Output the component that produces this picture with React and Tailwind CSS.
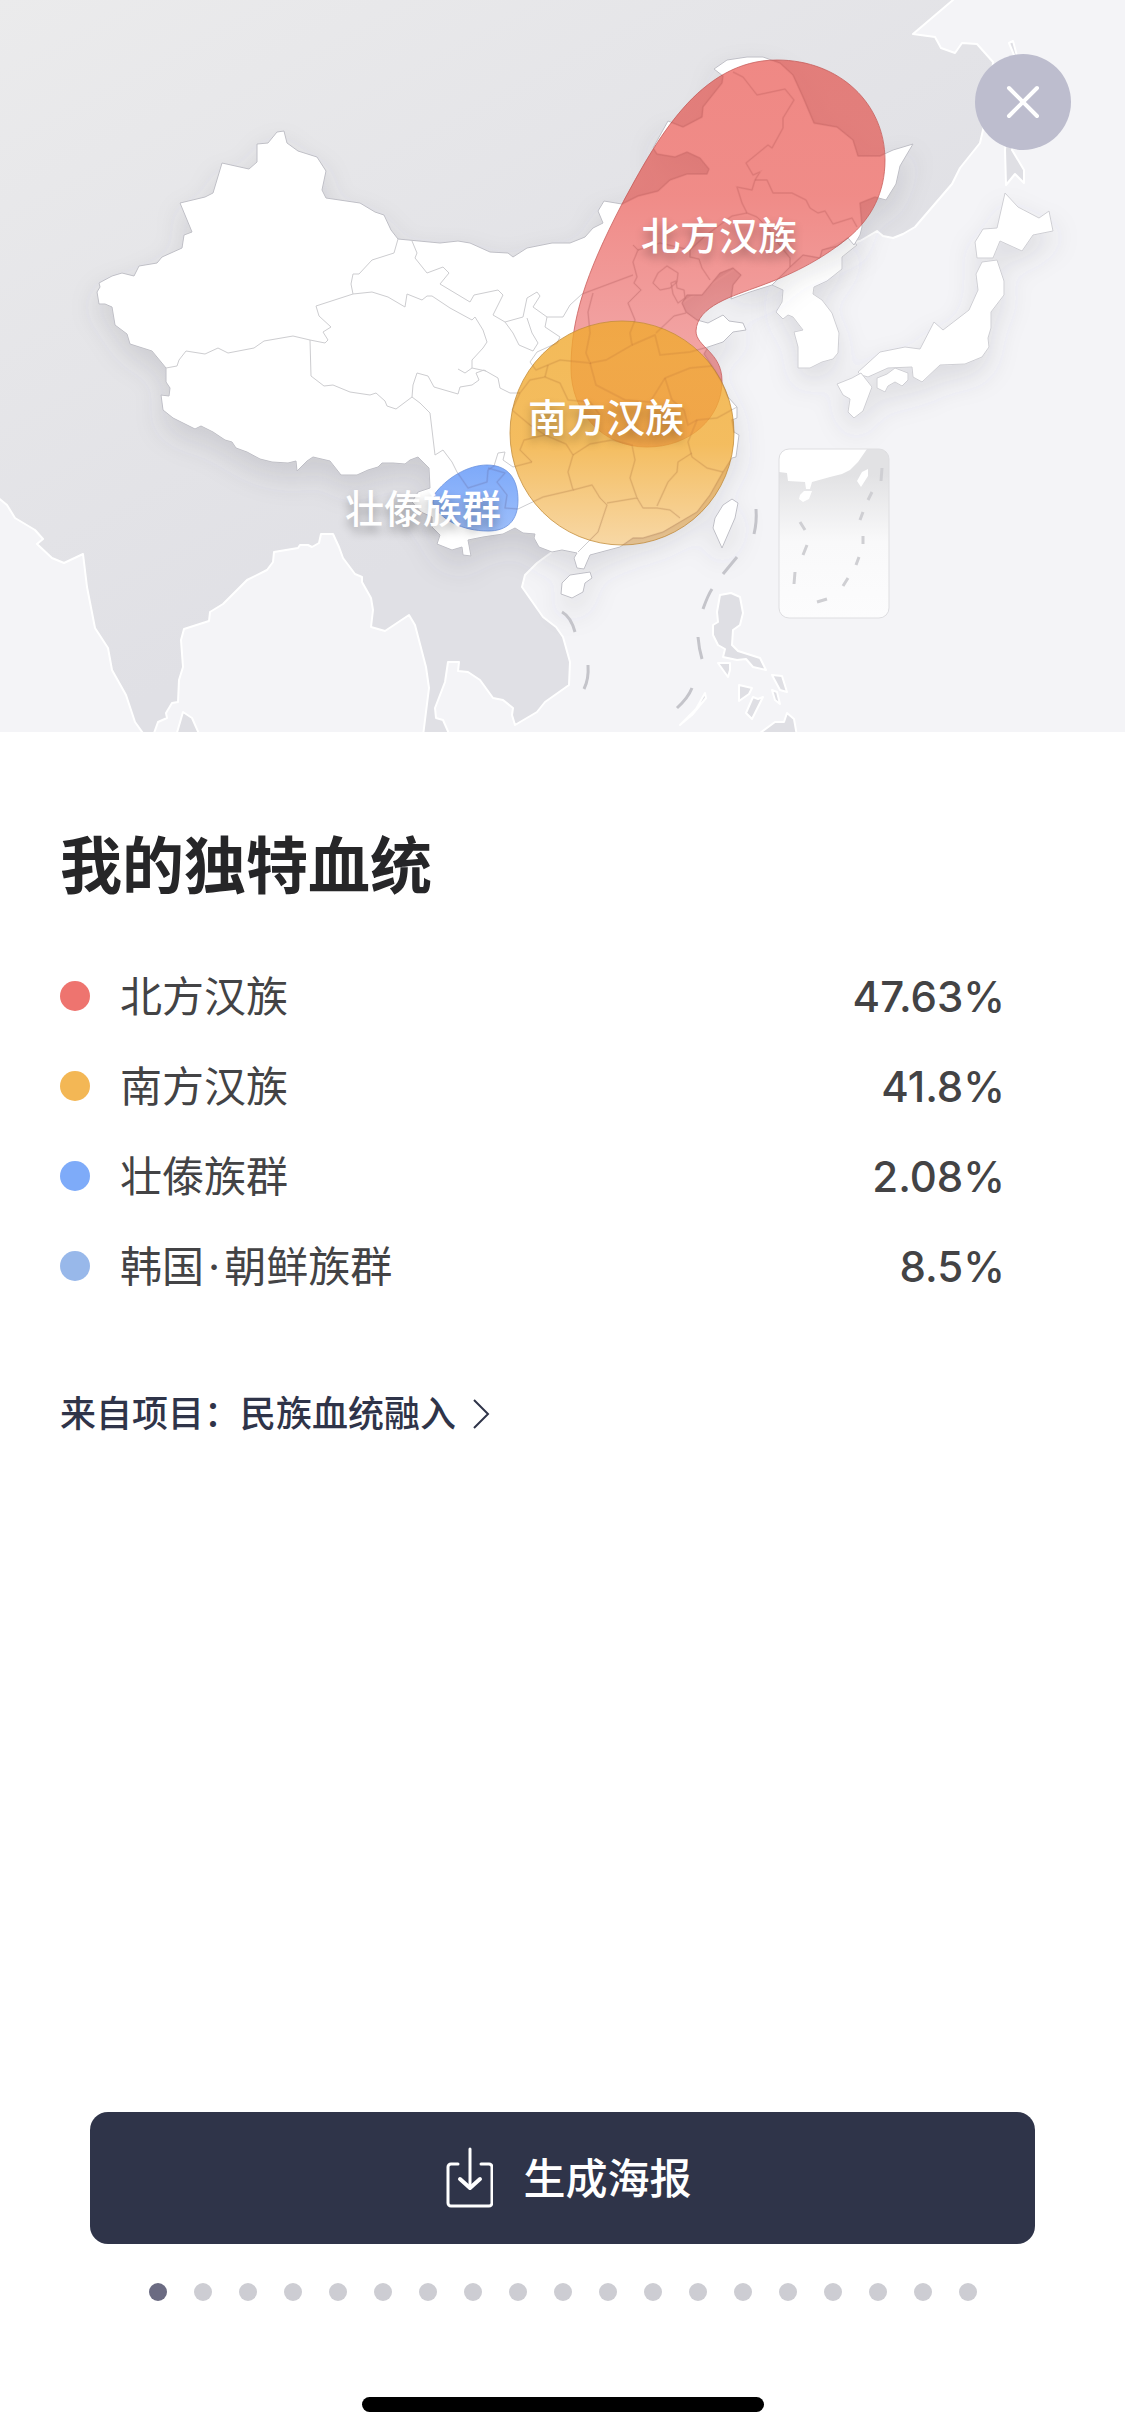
import { useState } from 'react';
import { clsx } from 'clsx';

const ANCESTRY = [
  { name: '北方汉族', value: '47.63%', dot: 'bg-[#ee746f]' },
  { name: '南方汉族', value: '41.8%', dot: 'bg-[#f3b755]' },
  { name: '壮傣族群', value: '2.08%', dot: 'bg-[#7eabf9]' },
  {
    name: (
      <>
        韩国<span className="mx-1">·</span>朝鲜族群
      </>
    ),
    value: '8.5%',
    dot: 'bg-[#98b8ea]',
  },
];

const LABELS = [
  { name: '北方汉族', place: 'left-[641px] top-[206px]' },
  { name: '南方汉族', place: 'left-[528px] top-[388px]' },
  { name: '壮傣族群', place: 'left-[345px] top-[479px]' },
];

const PAGE_COUNT = 19;

/* ---------- map outlines ---------- */

const ASIA =
  'M-4,-4 L957,-4 L953,0 L913,34 L935,37 L941,48 L955,53 L962,43 L977,44 L993,62 L990,100 L983,130 L980,143 L960,168 L952,184 L915,227 L903,234 L893,238 L883,236 L877,231 L860,241 L842,245 L780,240 L640,330 L560,530 L552,552 L537,563 L525,575 L522,587 L543,617 L556,627 L563,637 L570,662 L569,685 L545,702 L537,712 L515,725 L512,715 L513,708 L503,700 L493,698 L480,680 L468,672 L458,671 L459,662 L448,662 L445,682 L435,708 L436,718 L443,720 L450,736 L423,736 L429,688 L426,667 L415,625 L409,615 L385,631 L371,627 L373,610 L371,598 L362,582 L362,577 L355,574 L343,558 L339,547 L333,534 L321,534 L319,543 L312,547 L308,545 L300,545 L298,548 L274,552 L273,562 L267,570 L247,580 L223,604 L210,612 L209,621 L184,629 L181,640 L183,667 L179,680 L178,702 L172,703 L166,713 L167,718 L158,722 L153,736 L145,736 L135,722 L126,695 L112,670 L108,648 L95,628 L87,587 L83,554 L64,563 L52,558 L37,544 L43,539 L35,530 L15,518 L7,505 L-4,496 Z';

const SMALL_ISLANDS = [
  'M183,712 L192,718 L200,736 L176,736 Z',
  'M1009,43 L1013,41 L1017,56 L1024,100 L1012,150 L1024,170 L1024,183 L1015,174 L1006,185 L1005,150 L1010,100 L1014,55 Z',
  'M720,595 L731,593 L740,597 L743,613 L740,625 L733,630 L732,645 L738,651 L760,658 L766,670 L753,667 L746,659 L737,660 L723,657 L725,649 L718,645 L713,635 L713,625 L718,622 L717,612 Z',
  'M718,663 L730,663 L730,670 L728,677 Z',
  'M772,675 L782,676 L787,692 L780,690 Z',
  'M739,685 L752,688 L749,694 L739,701 Z',
  'M753,697 L758,699 L763,697 L752,719 L746,713 Z',
  'M772,690 L777,692 L780,704 L775,700 Z',
  'M787,713 L794,719 L797,736 L756,736 L775,722 L784,722 Z',
  'M705,693 L706,698 L692,715 L680,725 L696,709 Z',
];

const CHINA =
  'M284,131 L287,143 L298,151 L317,157 L326,171 L322,190 L326,198 L360,203 L375,212 L384,215 L391,230 L398,239 L440,243 L458,241 L470,243 L490,252 L508,253 L513,257 L527,248 L552,243 L570,243 L585,237 L593,228 L603,223 L598,211 L604,201 L622,204 L638,196 L658,191 L670,180 L687,174 L707,174 L709,169 L700,158 L687,152 L675,157 L657,154 L653,148 L668,121 L683,127 L702,117 L703,107 L722,83 L723,76 L714,69 L727,60 L747,57 L763,57 L780,63 L793,75 L803,97 L814,123 L837,127 L853,140 L858,156 L880,156 L893,150 L913,144 L900,166 L896,184 L886,200 L875,197 L860,203 L862,227 L860,235 L854,245 L848,238 L838,246 L822,250 L820,258 L803,255 L790,267 L772,285 L750,292 L731,299 L733,285 L741,275 L733,268 L720,273 L702,295 L687,295 L682,303 L686,312 L697,320 L708,323 L723,315 L729,321 L743,323 L746,330 L733,332 L723,342 L708,347 L704,354 L712,366 L722,382 L728,397 L737,407 L737,418 L732,420 L734,432 L739,435 L736,457 L732,458 L723,472 L710,495 L697,512 L680,522 L663,532 L643,538 L633,538 L620,547 L590,555 L584,569 L577,568 L574,558 L577,553 L562,550 L552,552 L539,547 L534,538 L535,534 L523,533 L515,528 L503,534 L483,537 L468,540 L471,556 L463,555 L462,547 L452,550 L437,544 L440,535 L432,527 L432,517 L421,512 L412,502 L418,492 L430,488 L429,468 L418,457 L410,460 L405,464 L393,463 L382,463 L378,467 L368,470 L357,475 L341,475 L330,461 L313,457 L307,461 L297,471 L296,461 L288,463 L272,462 L260,459 L247,452 L236,448 L232,442 L225,440 L213,432 L201,426 L195,429 L173,418 L163,410 L161,395 L169,396 L170,388 L166,382 L166,368 L152,351 L130,344 L127,334 L115,325 L112,307 L105,304 L99,304 L97,292 L100,287 L99,283 L112,276 L122,273 L134,276 L139,266 L157,263 L162,257 L182,248 L184,235 L192,232 L180,203 L205,197 L213,193 L222,163 L249,169 L257,162 L257,144 L268,143 L277,132 Z';

const CHINA_ISLANDS = [
  'M562,583 L570,575 L590,572 L592,578 L585,583 L583,592 L572,598 L561,594 Z',
  'M732,499 L738,503 L735,518 L722,548 L713,528 L715,518 L723,505 Z',
];

const KOREA =
  'M857,245 L842,257 L842,269 L827,281 L814,287 L813,294 L822,300 L832,313 L839,333 L838,353 L833,359 L822,362 L810,368 L798,368 L798,347 L794,332 L803,330 L793,317 L788,315 L783,319 L776,312 L782,302 L783,290 L772,285 L790,267 L803,255 L820,258 L822,250 L848,238 Z';

const JAPAN = [
  // Hokkaido
  'M1005,193 L1018,207 L1039,218 L1049,211 L1053,231 L1033,235 L1022,251 L1000,241 L993,258 L977,258 L975,242 L983,229 L997,228 Z',
  // Honshu
  'M997,260 L1004,281 L1004,295 L991,312 L991,328 L988,338 L989,347 L982,357 L965,364 L940,365 L922,382 L913,377 L912,367 L888,368 L868,377 L861,375 L858,372 L868,363 L880,352 L905,347 L920,349 L934,322 L943,330 L969,310 L978,290 L976,274 L982,262 Z',
  // Kyushu
  'M861,373 L872,387 L863,411 L854,418 L848,412 L850,399 L843,395 L837,384 L852,378 Z',
  // Shikoku
  'M895,368 L908,373 L908,380 L902,386 L895,382 L888,386 L885,392 L877,388 L877,378 L887,374 Z',
];

const PROVINCES = [
  'M166,368 L177,366 L179,360 L186,351 L205,354 L218,348 L228,353 L254,348 L264,341 L293,336 L310,340 L325,343 L328,340 L323,332 L331,327 L319,316 L316,306 L353,294 L372,292 L388,297 L405,307 L407,294 L422,300 L427,296 L432,296 L450,308 L472,320 L475,317 L483,330 L487,342 L483,348 L472,360 L472,368',
  'M398,239 L394,253 L372,260 L359,274 L353,274 L351,284 L353,294',
  'M310,340 L311,376 L324,386 L333,385 L350,392 L370,395 L376,393 L385,401 L387,406 L396,409 L412,397 L420,403 L430,413 L435,455',
  'M412,397 L413,385 L417,373 L428,376 L434,387 L458,394 L460,387 L472,385 L479,380 L476,373 L484,370 L498,378 L500,388 L510,393 L520,393',
  'M458,369 L465,373 L472,368 L486,371',
  'M412,241 L417,253 L415,258 L427,273 L443,267 L449,273 L440,284 L470,302 L474,295 L498,290 L503,295 L493,315 L505,322 L523,317 L527,298 L537,292 L540,296 L533,307 L547,317 L563,317 L570,305 L582,294 L633,275',
  'M505,322 L513,333 L519,345 L533,351 L538,343 L532,333 L527,318',
  'M547,317 L545,327 L560,337 L557,343 L537,352 L530,362 L536,370 L560,360 L590,363 L586,353 L590,333 L588,312 L593,293',
  'M633,245 L638,250 L633,262 L637,277 L634,283 L641,290 L628,303 L635,320 L630,333 L632,345 L606,360 L590,363',
  'M653,283 L658,273 L667,266 L678,273 L677,282 L670,288 L660,290 Z',
  'M671,283 L676,281 L677,288 L684,290 L685,298 L678,303 L673,294 Z',
  'M690,250 L690,257 L699,259 L702,268 L710,280',
  'M638,250 L660,243 L690,250 L705,236 L732,216 L747,213',
  'M733,72 L743,77 L757,95 L785,89 L794,100 L783,118 L783,128 L772,148 L768,145 L746,163 L753,175 L760,172 L755,180 L752,190 L737,187 L742,203 L747,213 L757,217',
  'M755,180 L767,180 L773,193 L792,193 L806,200 L810,208 L818,213 L825,211 L833,224 L852,218 L857,227',
  'M757,217 L768,228 L778,243 L790,258 L790,267',
  'M656,333 L674,316 L686,313',
  'M632,345 L655,335 L660,355 L690,352 L708,347',
  'M590,363 L596,385 L625,400 L650,402 L665,378 L690,368 L712,366',
  'M665,378 L672,400 L684,410 L688,425 L697,420 L717,418 L737,407',
  'M435,455 L443,450 L452,462 L457,472 L468,488 L487,482 L488,470 L494,466 L498,453 L505,452 L503,460 L513,467 L532,462',
  'M488,468 L505,473 L497,482 L507,495 L505,508 L518,509',
  'M518,509 L543,497 L573,490 L568,472 L573,455 L566,444 L545,435 L524,440 L520,450 L532,462',
  'M578,552 L598,532 L607,505 L600,498 L592,485 L573,490',
  'M607,503 L637,498 L630,478 L635,460 L632,445 L612,440 L590,444 L573,455',
  'M637,498 L643,508 L657,508 L670,510 L680,518',
  'M657,506 L668,482 L677,472 L678,462 L692,453',
  'M697,420 L688,442 L692,457 L707,468 L723,472',
  'M520,393 L530,380 L545,377 L560,383 L568,400 L590,402 L600,415',
  'M545,377 L548,365',
  'M520,393 L512,410 L530,425 L545,435',
];

const SEA_DASHES =
  'M756,509 Q757,522 754,534 M737,557 L723,574 M712,589 Q708,595 703,609 M698,637 Q699,649 702,659 M692,688 Q688,698 677,708 M562,612 Q571,617 575,632 M588,665 Q589,679 584,689';

const INSET_DASHES =
  'M882,468 L881,481 M872,492 L868,500 M863,512 L860,520 M863,536 L863,544 M859,557 L856,565 M848,578 L843,586 M827,599 L817,602 M800,522 L805,530 M807,545 L803,555 M795,572 L794,584';

const BLOB_NORTH =
  'M777,60 C840,60 885,104 885,160 C885,192 872,218 848,238 C818,262 790,275 760,286 C733,296 697,306 696,331 C696,347 722,352 722,381 C722,418 690,447 647,447 C602,447 571,412 571,368 C571,320 585,275 622,204 C656,141 699,60 777,60 Z';
const BLOB_ZHUANG =
  'M434,495 C446,478 468,465 487,465 C509,465 518,480 518,500 C518,521 507,531 488,531 C463,531 440,520 433,503 Z';

function AncestryMap() {
  return (
    <svg viewBox="0 0 1125 732" className="block h-auto w-full" role="img" aria-label="血统分布地图">
      <defs>
        <linearGradient id="land" x1="0" y1="0" x2="0.5" y2="0.7">
          <stop offset="0" stopColor="#ebebec" />
          <stop offset="1" stopColor="#e0e0e5" />
        </linearGradient>
        <linearGradient id="north" x1="0" y1="60" x2="0" y2="447" gradientUnits="userSpaceOnUse">
          <stop offset="0" stopColor="#eb6762" stopOpacity="0.78" />
          <stop offset="0.35" stopColor="#eb6762" stopOpacity="0.76" />
          <stop offset="0.75" stopColor="#ea6c6c" stopOpacity="0.62" />
          <stop offset="1" stopColor="#e8606c" stopOpacity="0.75" />
        </linearGradient>
        <linearGradient id="south" x1="0" y1="0" x2="0" y2="1">
          <stop offset="0" stopColor="#f0a92f" stopOpacity="0.8" />
          <stop offset="0.55" stopColor="#f1ac37" stopOpacity="0.8" />
          <stop offset="1" stopColor="#f0b04a" stopOpacity="0.5" />
        </linearGradient>
        <linearGradient id="zhuang" x1="0" y1="0" x2="0" y2="1">
          <stop offset="0" stopColor="#5d94f8" stopOpacity="0.8" />
          <stop offset="1" stopColor="#5d94f8" stopOpacity="0.6" />
        </linearGradient>
        <linearGradient id="insetSea" x1="0" y1="0" x2="0" y2="1">
          <stop offset="0.15" stopColor="#e2e2e4" />
          <stop offset="0.55" stopColor="#f9f9fa" />
          <stop offset="1" stopColor="#fcfcfd" />
        </linearGradient>
        <filter id="lift" x="-10%" y="-10%" width="120%" height="130%">
          <feDropShadow dx="0" dy="14" stdDeviation="14" floodColor="#50505f" floodOpacity="0.15" />
        </filter>
        <clipPath id="insetClip">
          <rect x="779" y="449" width="110" height="169" rx="10" />
        </clipPath>
        <clipPath id="blobClip">
          <path d={BLOB_NORTH} />
          <circle cx="622" cy="433" r="112" />
          <path d={BLOB_ZHUANG} />
        </clipPath>
      </defs>

      <rect width="1125" height="732" fill="#f4f4f7" />
      <g stroke="#fff" strokeWidth="2" strokeLinejoin="round">
        <path d={ASIA} fill="url(#land)" />
        {SMALL_ISLANDS.map((d) => (
          <path key={d} d={d} fill="#dfdfe4" />
        ))}
      </g>

      <g filter="url(#lift)" fill="#fff" stroke="#cfcfd4" strokeWidth="1" strokeLinejoin="round">
        <path d={KOREA} />
        {JAPAN.map((d) => (
          <path key={d} d={d} />
        ))}
      </g>
      <g filter="url(#lift)" fill="#fff" stroke="#bfbfc6" strokeWidth="1" strokeLinejoin="round">
        <path d={CHINA} />
        {CHINA_ISLANDS.map((d) => (
          <path key={d} d={d} />
        ))}
      </g>
      <g fill="none" stroke="#cdcdd0" strokeWidth="1" strokeLinejoin="round">
        {PROVINCES.map((d) => (
          <path key={d} d={d} />
        ))}
      </g>
      <path d={SEA_DASHES} fill="none" stroke="#c4c4ca" strokeWidth="3" />

      {/* South China Sea inset */}
      <g clipPath="url(#insetClip)">
        <rect x="779" y="449" width="110" height="169" fill="url(#insetSea)" />
        <path
          d="M779,449 L867,449 L858,462 L850,470 L842,474 L830,477 L812,482 L810,489 L806,489 L805,482 L788,481 L787,473 L779,472 Z"
          fill="#fff"
        />
        <path d="M800,495 L804,491 L812,491 L809,499 L803,502 L799,499 Z" fill="#fff" />
        <path d="M862,472 L868,469 L868,476 L861,487 L857,481 Z" fill="#fff" />
        <path d={INSET_DASHES} fill="none" stroke="#cfcfd3" strokeWidth="3" />
      </g>
      <rect x="779" y="449" width="110" height="169" rx="10" fill="none" stroke="#dedee1" />

      <path d={BLOB_NORTH} fill="url(#north)" stroke="#c9605e" strokeOpacity="0.8" />
      <circle cx="622" cy="433" r="112" fill="url(#south)" stroke="#c48f3c" strokeOpacity="0.8" />
      <path d={BLOB_ZHUANG} fill="url(#zhuang)" stroke="#6d94de" strokeOpacity="0.8" />

      {/* borders and foreign ground showing through the blobs */}
      <g clipPath="url(#blobClip)">
        <path d={`M0,0 H1125 V732 H0 Z ${CHINA} ${KOREA}`} fillRule="evenodd" fill="#7a3838" fillOpacity="0.06" />
        <g fill="none" stroke="#7a3838" strokeOpacity="0.08" strokeWidth="2">
          <path d={CHINA} />
          {PROVINCES.map((d) => (
            <path key={d} d={d} />
          ))}
        </g>
      </g>
    </svg>
  );
}

function PosterIcon() {
  return (
    <svg
      width="48"
      height="62"
      viewBox="0 0 48 62"
      fill="none"
      stroke="#fff"
      strokeWidth="3"
      strokeLinecap="round"
      strokeLinejoin="round"
      aria-hidden="true"
    >
      <path d="M13 17H6a3 3 0 0 0-3 3v36a3 3 0 0 0 3 3h38a3 3 0 0 0 3-3V20a3 3 0 0 0-3-3h-8" />
      <path d="M25 2v39" />
      <path d="M15 32l10 9 10-9" strokeWidth="4" />
    </svg>
  );
}

export default function App() {
  const [page, setPage] = useState(0);

  return (
    <div className="flex min-h-screen flex-col bg-white font-['Inter','Noto_Sans_CJK_SC',sans-serif]">
      <header className="relative">
        <AncestryMap />
        {LABELS.map((label) => (
          <span
            key={label.name}
            className={clsx(
              'absolute text-[39px] leading-[60px] font-medium whitespace-nowrap text-white',
              '[text-shadow:0_6px_10px_rgb(0_0_0/0.3)]',
              label.place
            )}
          >
            {label.name}
          </span>
        ))}
        <button
          type="button"
          aria-label="关闭"
          className="absolute top-[54px] right-[54px] flex size-24 items-center justify-center rounded-full bg-[#bdbdce]"
        >
          <svg width="36" height="36" viewBox="0 0 36 36" stroke="#fff" strokeWidth="4" strokeLinecap="round" aria-hidden="true">
            <path d="M4 4l28 28M32 4L4 32" />
          </svg>
        </button>
      </header>

      <main className="flex-1 px-[60px] pt-[93px]">
        <h1 className="text-[62px] leading-[84px] font-bold text-[#262628]">我的独特血统</h1>

        <dl className="mt-[42px] pr-[60px]">
          {ANCESTRY.map((item) => (
            <div key={item.value} className="flex h-[90px] items-center text-[42px] text-[#434345]">
              <span className={clsx('size-[30px] rounded-full', item.dot)} />
              <dt className="ml-[30px] flex-1">{item.name}</dt>
              <dd className="font-medium">{item.value}</dd>
            </div>
          ))}
        </dl>

        <a href="#project" className="mt-[76px] inline-flex items-center gap-4 text-[36px] leading-[54px] font-medium text-[#2f3449]">
          来自项目：民族血统融入
          <svg width="18" height="30" viewBox="0 0 18 30" fill="none" stroke="currentColor" strokeWidth="2" aria-hidden="true">
            <path d="M2 1l14 14L2 29" />
          </svg>
        </a>
      </main>

      <footer className="flex flex-col items-center px-[90px] pb-6">
        <button
          type="button"
          className="flex h-[132px] w-full items-center justify-center gap-[30px] rounded-[18px] bg-[#2f3449] pl-3 text-[42px] font-medium text-white"
        >
          <PosterIcon />
          生成海报
        </button>
        <nav aria-label="分页" className="mt-[39px] flex gap-[27px]">
          {Array.from({ length: PAGE_COUNT }, (_, i) => (
            <button
              key={i}
              type="button"
              aria-label={`第 ${i + 1} 页`}
              onClick={() => setPage(i)}
              className={clsx('size-[18px] rounded-full', i === page ? 'bg-[#6b6b82]' : 'bg-[#cdcdd3]')}
            />
          ))}
        </nav>
        <div className="mt-24 h-[15px] w-[402px] rounded-full bg-black" />
      </footer>
    </div>
  );
}
